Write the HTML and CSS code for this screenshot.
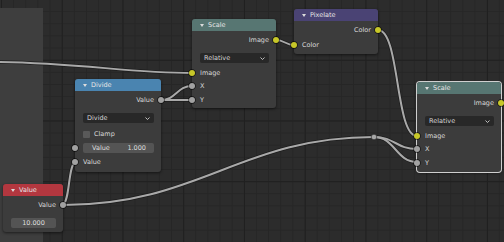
FILE: index.html
```html
<!DOCTYPE html>
<html lang="en">
<head>
    <meta charset="UTF-8">
    <title>Node Editor</title>
    <link rel="stylesheet" href="styles.css">
</head>
<body>
<div class="editor">
    <div class="frame"></div>

    <!-- links between sockets -->
    <svg class="links" width="504" height="242" viewBox="0 0 504 242">
        <defs>
            <path id="l1" d="M-2 62 C80 63, 130 73, 192 73"/>
            <path id="l2" d="M161 100 C176 100, 177 86, 192 86"/>
            <path id="l3" d="M161 100 C176 100, 177 100, 192 100"/>
            <path id="l4" d="M276 40 C285 40, 285 45, 294 45"/>
            <path id="l5" d="M378 30 C400 30, 395 136, 417 136"/>
            <path id="l6" d="M63 205 C200 205, 240 137, 374 137"/>
            <path id="l7" d="M374 137 C395 137, 396 149, 417 149"/>
            <path id="l8" d="M374 137 C395 137, 396 162, 417 162"/>
            <path id="l9" d="M63 205 C70 200, 68 167, 75 162"/>
        </defs>
        <g class="wire-back">
            <use href="#l1"/><use href="#l2"/><use href="#l3"/>
            <use href="#l4"/><use href="#l5"/><use href="#l6"/>
            <use href="#l7"/><use href="#l8"/><use href="#l9"/>
        </g>
        <g class="wire">
            <use href="#l1"/><use href="#l2"/><use href="#l3"/>
            <use href="#l4"/><use href="#l5"/><use href="#l6"/>
            <use href="#l7"/><use href="#l8"/><use href="#l9"/>
        </g>
        <circle class="reroute" cx="374" cy="137" r="2.8"/>
    </svg>

    <!-- Pixelate -->
    <div class="node node-pixelate">
        <div class="node-head head-filter"><span class="arrow"></span>Pixelate</div>
        <div class="node-body">
            <div class="row out">Color<span class="sock img"></span></div>
            <div class="row in next">Color<span class="sock img"></span></div>
        </div>
    </div>

    <!-- Scale (top) -->
    <div class="node node-scale-a">
        <div class="node-head head-distort"><span class="arrow"></span>Scale</div>
        <div class="node-body">
            <div class="row out">Image<span class="sock img"></span></div>
            <div class="row prop">
                <div class="select">Relative<svg class="chev" width="5" height="3" viewBox="0 0 5 3"><path d="M0.5 0.5 L2.5 2.5 L4.5 0.5"/></svg></div>
            </div>
            <div class="row in tight">Image<span class="sock img"></span></div>
            <div class="row in tight">X<span class="sock val"></span></div>
            <div class="row in tight">Y<span class="sock val"></span></div>
        </div>
    </div>

    <!-- Divide -->
    <div class="node node-divide">
        <div class="node-head head-convert"><span class="arrow"></span>Divide</div>
        <div class="node-body">
            <div class="row out">Value<span class="sock val"></span></div>
            <div class="row prop">
                <div class="select">Divide<svg class="chev" width="5" height="3" viewBox="0 0 5 3"><path d="M0.5 0.5 L2.5 2.5 L4.5 0.5"/></svg></div>
            </div>
            <div class="row clamp"><span class="check"></span>Clamp</div>
            <div class="row in"><div class="field"><span>Value</span><span>1.000</span></div><span class="sock val"></span></div>
            <div class="row in">Value<span class="sock val"></span></div>
        </div>
    </div>

    <!-- Scale (right, selected) -->
    <div class="node node-scale-b selected">
        <div class="node-head head-distort"><span class="arrow"></span>Scale</div>
        <div class="node-body">
            <div class="row out">Image<span class="sock img"></span></div>
            <div class="row prop">
                <div class="select">Relative<svg class="chev" width="5" height="3" viewBox="0 0 5 3"><path d="M0.5 0.5 L2.5 2.5 L4.5 0.5"/></svg></div>
            </div>
            <div class="row in tight">Image<span class="sock img"></span></div>
            <div class="row in tight">X<span class="sock val"></span></div>
            <div class="row in tight">Y<span class="sock val"></span></div>
        </div>
    </div>

    <!-- Value -->
    <div class="node node-value">
        <div class="node-head head-input"><span class="arrow"></span>Value</div>
        <div class="node-body">
            <div class="row out">Value<span class="sock val"></span></div>
            <div class="row prop"><div class="field center">10.000</div></div>
        </div>
    </div>
</div>
</body>
</html>
```

FILE: styles.css
```css
body {
    margin: 0;
    background: #2b2b2b;
    font-family: "DejaVu Sans", sans-serif;
    font-size: 6.5px;
    color: #d8d8d8;
}

.editor {
    position: relative;
    width: 504px;
    height: 242px;
    overflow: hidden;
    background-color: #2c2c2c;
    background-image:
        linear-gradient(to right, #202020 1px, transparent 1px),
        linear-gradient(to bottom, #202020 1px, transparent 1px),
        linear-gradient(to right, #262626 1px, transparent 1px),
        linear-gradient(to bottom, #262626 1px, transparent 1px);
    background-size: 60.75px 60.75px, 60.75px 60.75px, 12.15px 12.15px, 12.15px 12.15px;
    background-position: 1px -1px, 1px -1px, 1px -1px, 1px -1px;
}

.frame {
    position: absolute;
    left: 0;
    top: 8px;
    width: 43px;
    height: 234px;
    background: #3e3e3e;
}

/* links */
.links {
    position: absolute;
    left: 0;
    top: 0;
}

.wire-back use {
    fill: none;
    stroke: #1c1c1c;
    stroke-width: 3.4;
}

.wire use {
    fill: none;
    stroke: #a9a9a9;
    stroke-width: 2;
}

.reroute {
    fill: #a6a6a6;
    stroke: #1c1c1c;
    stroke-width: 0.6;
}

/* nodes */
.node {
    position: absolute;
    display: flex;
    flex-direction: column;
    background: #3c3c3c;
    border-radius: 3px;
    box-shadow: 0 1px 3px rgba(0, 0, 0, 0.55);
}

.node.selected {
    box-shadow: 0 0 0 1px #cfcfcf, 0 1px 3px rgba(0, 0, 0, 0.55);
}

.node-pixelate { left: 294px; top: 9px; width: 84px; height: 45px; }
.node-scale-a  { left: 192px; top: 19px; width: 84px; height: 89px; }
.node-divide   { left: 75px; top: 79px; width: 86px; height: 93px; }
.node-scale-b  { left: 417px; top: 82px; width: 84px; height: 90px; }
.node-value    { left: 3px; top: 184px; width: 60px; height: 48px; }

.node-head {
    height: 12px;
    flex: none;
    display: flex;
    align-items: center;
    gap: 4px;
    padding-left: 8px;
    border-radius: 3px 3px 0 0;
    color: #e6e6e6;
}

.head-convert { background: #4a84b0; }
.head-distort { background: #577672; }
.head-filter  { background: #4a4374; }
.head-input   { background: #b3373f; }

.arrow {
    width: 0;
    height: 0;
    border-left: 2px solid transparent;
    border-right: 2px solid transparent;
    border-top: 3px solid #dcdcdc;
}

.node-body {
    display: flex;
    flex-direction: column;
    padding-top: 2px;
}

.row {
    position: relative;
    height: 14px;
    flex: none;
    display: flex;
    align-items: center;
    padding: 0 7px 0 8px;
}

.row.out {
    justify-content: flex-end;
}

.row.prop {
    margin-top: 4px;
}

.row.tight {
    height: 13.5px;
}

.row.prop + .row.tight {
    margin-top: 1px;
}

.row.next {
    margin-top: 1px;
}

.row.clamp {
    margin-top: 2px;
    gap: 4px;
}

.sock {
    position: absolute;
    top: 50%;
    width: 6px;
    height: 6px;
    margin-top: -3px;
    border-radius: 50%;
    box-shadow: 0 0 0 0.7px rgba(0, 0, 0, 0.7);
}

.row.out .sock { right: -3px; }
.row.in .sock { left: -3px; }

.sock.img { background: #c7c729; }
.sock.val { background: #a1a1a1; }

.select {
    flex: 1;
    height: 9.5px;
    display: flex;
    align-items: center;
    justify-content: space-between;
    padding: 0 4px;
    background: #282828;
    border-radius: 2px;
    color: #d6d6d6;
}

.chev path {
    fill: none;
    stroke: #cfcfcf;
    stroke-width: 0.9;
}

.check {
    width: 7px;
    height: 7px;
    background: #595959;
    border-radius: 1px;
}

.field {
    flex: 1;
    height: 10px;
    display: flex;
    align-items: center;
    justify-content: space-between;
    padding: 0 8px 0 9px;
    background: #545454;
    border-radius: 2px;
    color: #dedede;
}

.field.center {
    justify-content: center;
    padding: 0;
}
```
